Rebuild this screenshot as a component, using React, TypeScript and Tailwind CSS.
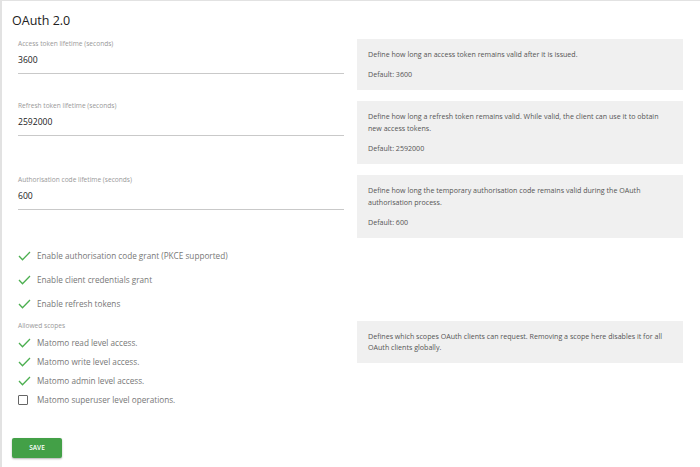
import React from "react";

const font = { fontFamily: '"Open Sans", "Noto Sans", Arial, sans-serif' };

type Field = { label: string; value: string; help: string[]; def: string };

const fields: Field[] = [
  {
    label: "Access token lifetime (seconds)",
    value: "3600",
    help: ["Define how long an access token remains valid after it is issued."],
    def: "Default: 3600",
  },
  {
    label: "Refresh token lifetime (seconds)",
    value: "2592000",
    help: [
      "Define how long a refresh token remains valid. While valid, the client can use it to obtain new access tokens.",
    ],
    def: "Default: 2592000",
  },
  {
    label: "Authorisation code lifetime (seconds)",
    value: "600",
    help: [
      "Define how long the temporary authorisation code remains valid during the OAuth authorisation process.",
    ],
    def: "Default: 600",
  },
];

function Tick() {
  return (
    <svg width="13" height="10" viewBox="0 0 13 10" className="shrink-0">
      <polyline
        points="1,5 4.5,8.8 12,1"
        fill="none"
        stroke="#4caf50"
        strokeWidth="1.3"
      />
    </svg>
  );
}

function Check({ label, checked = true }: { label: string; checked?: boolean }) {
  return (
    <div className="flex items-center gap-[6px] h-[13px]">
      <div className="w-[13px] flex justify-start">
        {checked ? (
          <Tick />
        ) : (
          <div className="w-[10px] h-[10px] border-[1.5px] border-[#666] rounded-[1px]" />
        )}
      </div>
      <span className="text-[#777] text-[8.2px] leading-[13px]">{label}</span>
    </div>
  );
}

export default function App() {
  return (
    <div
      style={font}
      className="w-[700px] h-[467px] bg-white border-l-2 border-t border-[#e2e2e2] overflow-hidden"
    >
      <div className="pl-[10px] pt-[12px]">
        <h2 className="text-[12.5px] text-[#212121] leading-[16px]">OAuth 2.0</h2>
      </div>

      <div className="pl-[16px] pr-[17px] mt-[10px]">
        <div className="flex flex-col gap-[11px]">
          {fields.map((f) => (
            <div key={f.label} className="grid grid-cols-[326px_326px] gap-x-[13px]">
              <div>
                <div className="text-[6.6px] text-[#999] leading-[9px]">{f.label}</div>
                <div className="mt-[6px] text-[8.6px] text-[#212121] leading-[12px]">
                  {f.value}
                </div>
                <div className="mt-[7px] h-px bg-[#c9c9c9]" />
              </div>
              <div className="bg-[#f0f0f0] px-[11px] pt-[9px] pb-[10px] text-[7.1px] text-[#555] leading-[12px]">
                {f.help.map((h) => (
                  <p key={h}>{h}</p>
                ))}
                <p className="mt-[8px]">{f.def}</p>
              </div>
            </div>
          ))}
        </div>

        <div className="mt-[11px] flex flex-col gap-[11px]">
          <Check label="Enable authorisation code grant (PKCE supported)" />
          <Check label="Enable client credentials grant" />
          <Check label="Enable refresh tokens" />
        </div>

        <div className="mt-[11px] grid grid-cols-[326px_326px] gap-x-[13px]">
          <div>
            <div className="text-[6.6px] text-[#999] leading-[9px]">Allowed scopes</div>
            <div className="mt-[6px] flex flex-col gap-[6px]">
              <Check label="Matomo read level access." />
              <Check label="Matomo write level access." />
              <Check label="Matomo admin level access." />
              <Check label="Matomo superuser level operations." checked={false} />
            </div>
          </div>
          <div className="self-start bg-[#f0f0f0] px-[11px] py-[10px] text-[7.1px] text-[#555] leading-[11px]">
            <p>
              Defines which scopes OAuth clients can request. Removing a scope here disables it
              for all OAuth clients globally.
            </p>
          </div>
        </div>
      </div>

      <div className="pl-[10px] mt-[26px]">
        <button className="w-[50px] h-[20px] bg-[#43a047] text-white text-[6.5px] font-semibold rounded-[2px] shadow-[0_1px_2px_rgba(0,0,0,0.3)]">
          SAVE
        </button>
      </div>
    </div>
  );
}
